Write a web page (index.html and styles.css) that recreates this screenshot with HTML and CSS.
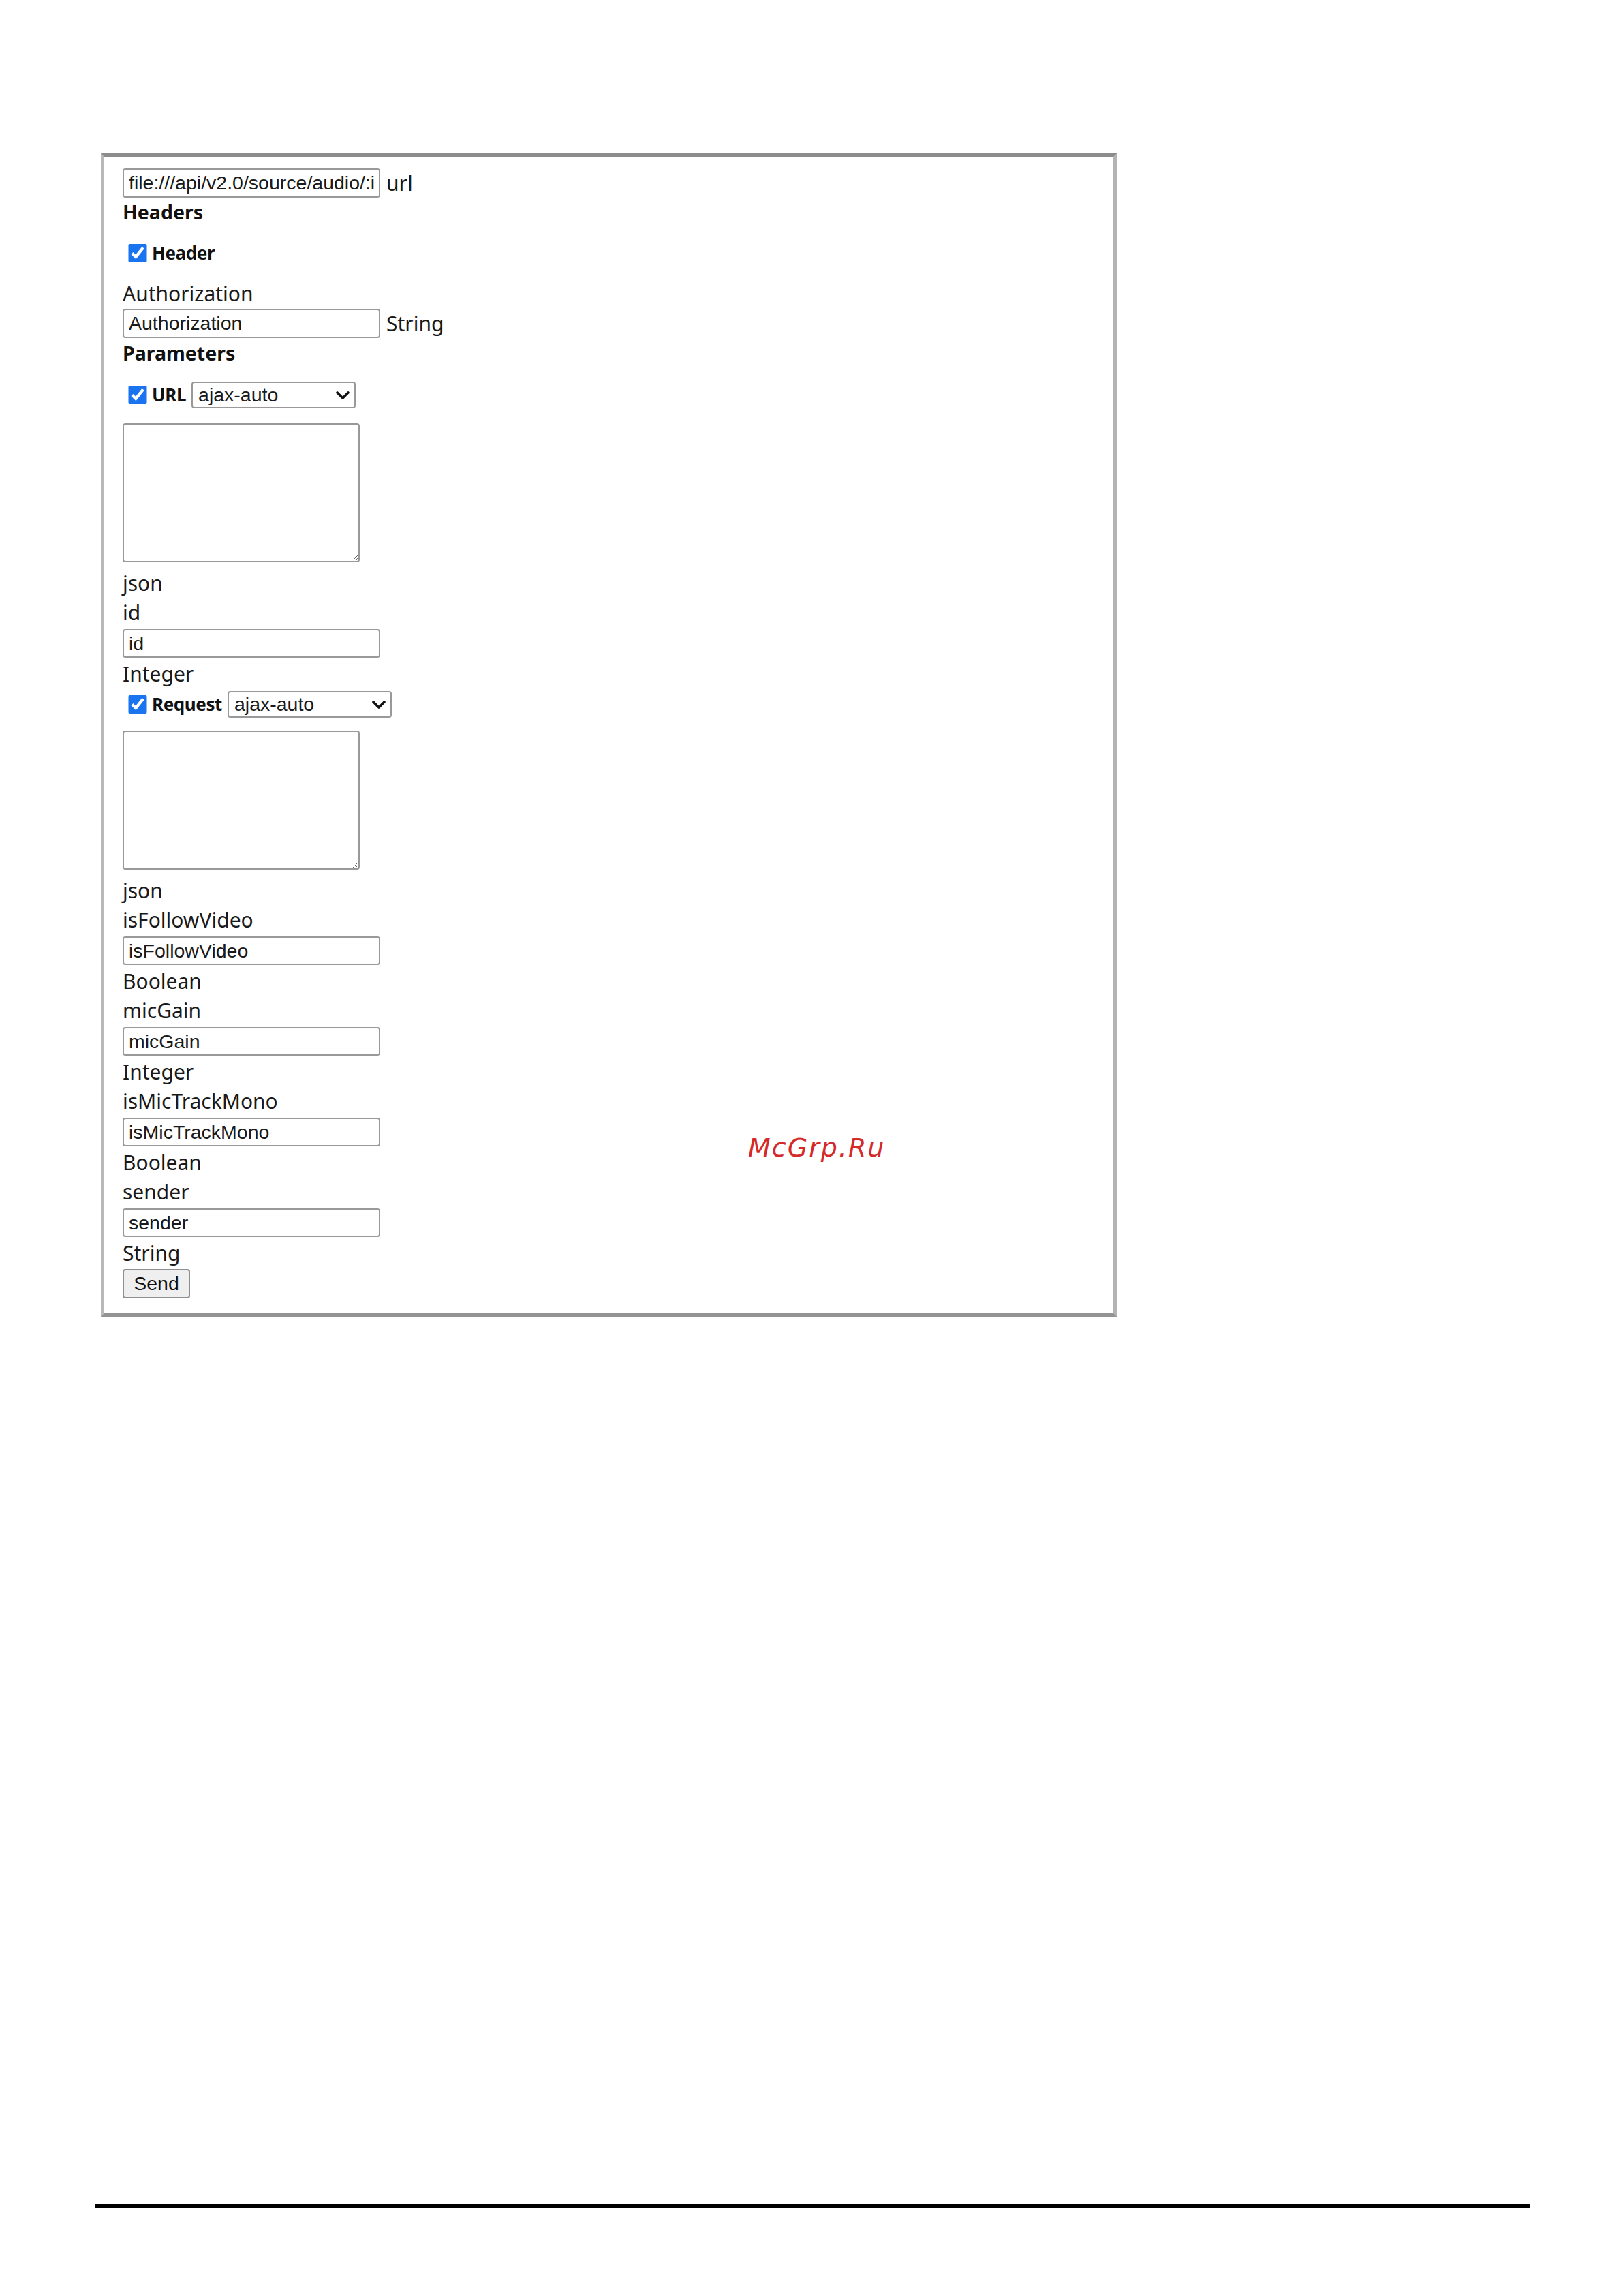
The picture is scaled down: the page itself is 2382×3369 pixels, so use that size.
FILE: index.html
```
<!DOCTYPE html>
<html lang="en">
<head>
<meta charset="utf-8">
<title>API test form</title>
<link rel="stylesheet" href="styles.css">
</head>
<body>
<div class="page">
  <div class="frame">
    <div class="row">
      <input class="text" type="text" value="file:///api/v2.0/source/audio/:id">
      <span class="side">url</span>
    </div>
    <div class="h">Headers</div>
    <div class="check-row hdr">
      <input class="cb" type="checkbox" checked>
      <span class="cb-lbl">Header</span>
    </div>
    <div class="lbl">Authorization</div>
    <div class="row row-auth">
      <input class="text" type="text" value="Authorization">
      <span class="side">String</span>
    </div>
    <div class="h h-params">Parameters</div>
    <div class="check-row">
      <input class="cb" type="checkbox" checked>
      <span class="cb-lbl">URL</span>
      <span class="sel-wrap">
        <select class="sel"><option>ajax-auto</option></select>
        <svg class="chev" viewBox="0 0 20 12" width="20" height="12"><path d="M2 2 L10 10 L18 2" fill="none" stroke="#111" stroke-width="3.6" stroke-linecap="round" stroke-linejoin="round"/></svg>
      </span>
    </div>
    <textarea class="area"></textarea>
    <div class="lbl">json</div>
    <div class="lbl">id</div>
    <input class="text field" type="text" value="id">
    <div class="lbl">Integer</div>
    <div class="check-row req">
      <input class="cb" type="checkbox" checked>
      <span class="cb-lbl">Request</span>
      <span class="sel-wrap">
        <select class="sel"><option>ajax-auto</option></select>
        <svg class="chev" viewBox="0 0 20 12" width="20" height="12"><path d="M2 2 L10 10 L18 2" fill="none" stroke="#111" stroke-width="3.6" stroke-linecap="round" stroke-linejoin="round"/></svg>
      </span>
    </div>
    <textarea class="area"></textarea>
    <div class="lbl">json</div>
    <div class="lbl">isFollowVideo</div>
    <input class="text field" type="text" value="isFollowVideo">
    <div class="lbl">Boolean</div>
    <div class="lbl">micGain</div>
    <input class="text field" type="text" value="micGain">
    <div class="lbl">Integer</div>
    <div class="lbl">isMicTrackMono</div>
    <input class="text field" type="text" value="isMicTrackMono">
    <div class="lbl">Boolean</div>
    <div class="lbl">sender</div>
    <input class="text field" type="text" value="sender">
    <div class="lbl">String</div>
    <button class="send" type="button">Send</button>
  </div>
  <div class="watermark">McGrp.Ru</div>
  <div class="rule"></div>
</div>
</body>
</html>
```
FILE: styles.css
```
html, body {
  margin: 0;
  padding: 0;
  background: #ffffff;
}

.page {
  position: relative;
  padding: 225px 0 0 139px;
  height: 3144px;
}

.frame {
  margin-left: 9px;
  width: 1491px;
  box-sizing: border-box;
  border-style: solid;
  border-width: 5px;
  border-color: #8c8c8c #b4b4b4 #939393 #b8b8b8;
  padding: 17px 28px 22px 27px;
  display: flex;
  flex-direction: column;
  align-items: flex-start;
  font-family: "Noto Sans", "DejaVu Sans", sans-serif;
  color: #1a1a1a;
}

.row {
  display: flex;
  align-items: center;
  height: 43px;
}

.row-auth {
  margin-top: 1px;
}

.side {
  font-size: 30px;
  line-height: 43px;
  margin-left: 9px;
}

.text {
  box-sizing: border-box;
  width: 378px;
  height: 43px;
  margin: 0;
  padding: 0 7px;
  border: 2px solid #999999;
  border-radius: 4px;
  background: #fff;
  font-family: "Liberation Sans", Arial, sans-serif;
  font-size: 28.5px;
  color: #1a1a1a;
  outline: none;
}

.field {
  height: 42px;
  margin: 3px 0 2px;
}

.h {
  font-size: 28.5px;
  font-weight: 700;
  line-height: 43px;
  color: #111;
  margin-bottom: 17px;
}

.h-params {
  margin-top: 1px;
  margin-bottom: 18px;
}

.lbl {
  font-size: 30px;
  line-height: 43px;
  height: 43px;
}

.check-row {
  display: flex;
  align-items: center;
  height: 42px;
  margin-bottom: 21px;
}

.check-row.hdr {
  margin-bottom: 17px;
}

.check-row.req {
  margin-top: 2px;
  margin-bottom: 18px;
}

.cb {
  width: 28px;
  height: 27px;
  margin: 0 7px 0 8px;
  accent-color: #1a74f0;
}

.cb-lbl {
  font-size: 26px;
  font-weight: 700;
  color: #111;
  line-height: 42px;
  letter-spacing: -0.4px;
}

.sel-wrap {
  position: relative;
  display: inline-block;
  margin-left: 8px;
  height: 39px;
}

.sel {
  -webkit-appearance: none;
  appearance: none;
  box-sizing: border-box;
  width: 241px;
  height: 39px;
  margin: 0;
  padding: 0 36px 0 8px;
  border: 2px solid #999999;
  border-radius: 4px;
  background: #fff;
  font-family: "Liberation Sans", Arial, sans-serif;
  font-size: 28.5px;
  color: #1a1a1a;
}

.chev {
  position: absolute;
  right: 9px;
  top: 14px;
  pointer-events: none;
}

.area {
  box-sizing: border-box;
  width: 348px;
  height: 204px;
  margin: 0 0 9px;
  border: 2px solid #999999;
  border-radius: 4px;
  resize: both;
}

.send {
  box-sizing: border-box;
  width: 99px;
  height: 43px;
  margin-top: 2px;
  padding: 0;
  border: 2px solid #8f8f8f;
  border-radius: 4px;
  background: #efefef;
  font-family: "Liberation Sans", Arial, sans-serif;
  font-size: 28.5px;
  color: #111;
}

.watermark {
  position: absolute;
  left: 1098px;
  top: 1665px;
  font-family: "DejaVu Sans", sans-serif;
  font-style: italic;
  font-size: 38px;
  line-height: 38px;
  letter-spacing: 2px;
  color: #d42a2a;
}

.rule {
  width: 2106px;
  height: 6px;
  background: #000;
  margin-top: 1302px;
}
```
